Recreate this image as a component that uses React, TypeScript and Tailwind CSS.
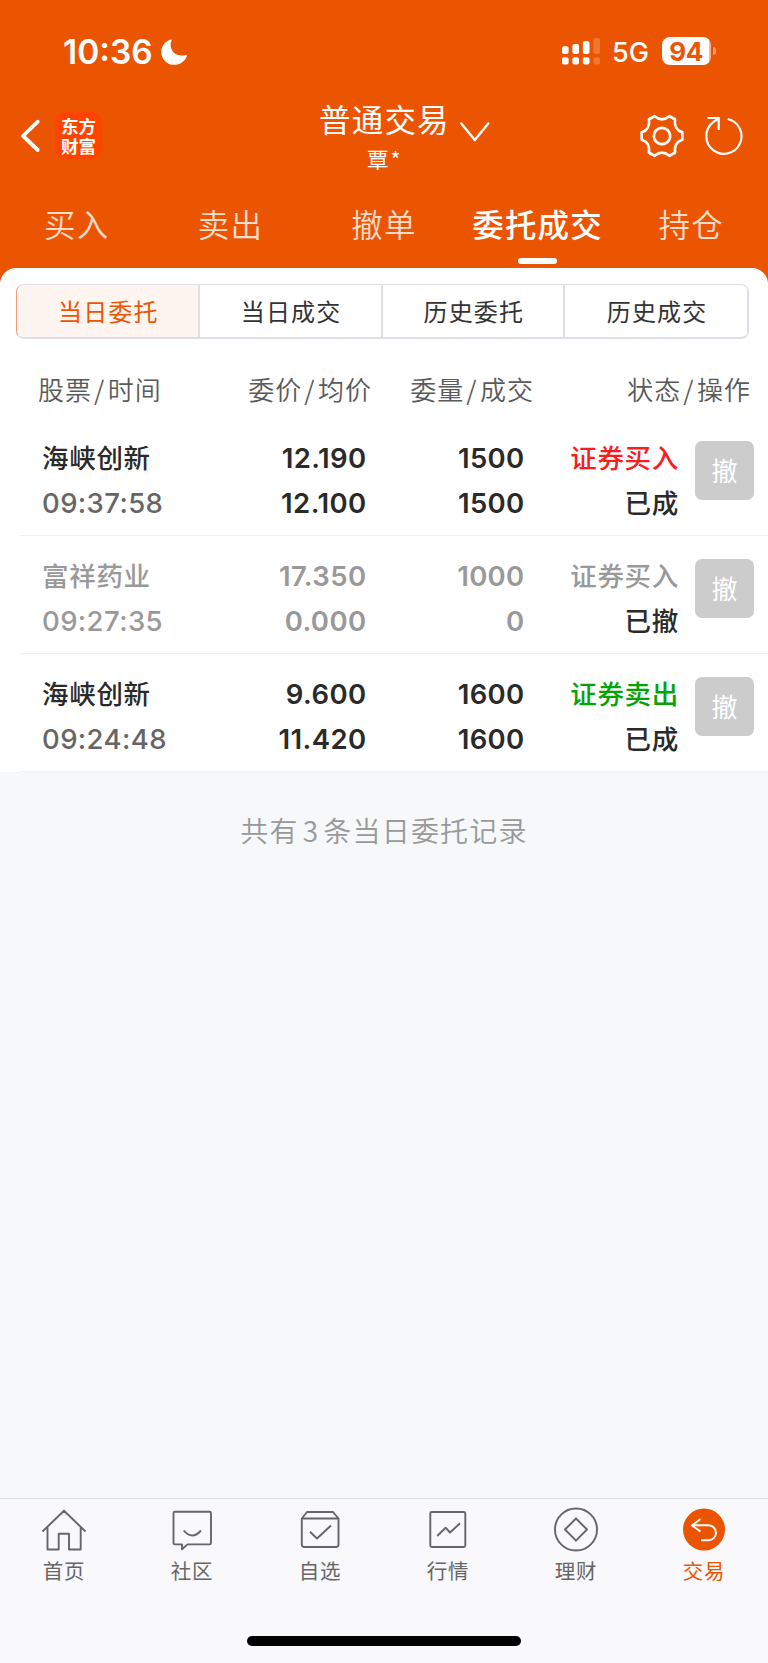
import React from "react";

const CJK = "font-['Noto_Sans_CJK_SC',sans-serif]";
const NUM = "font-['Inter','Noto_Sans_CJK_SC',sans-serif]";

type Order = {
  name: string;
  time: string;
  price: string;
  avg: string;
  amount: string;
  filled: string;
  side: string;
  sideColor: string;
  status: string;
  cancelled?: boolean;
};

const orders: Order[] = [
  { name: "海峡创新", time: "09:37:58", price: "12.190", avg: "12.100", amount: "1500", filled: "1500", side: "证券买入", sideColor: "text-[#fb1c1c]", status: "已成" },
  { name: "富祥药业", time: "09:27:35", price: "17.350", avg: "0.000", amount: "1000", filled: "0", side: "证券买入", sideColor: "text-[#999999]", status: "已撤", cancelled: true },
  { name: "海峡创新", time: "09:24:48", price: "9.600", avg: "11.420", amount: "1600", filled: "1600", side: "证券卖出", sideColor: "text-[#06a306]", status: "已成" },
];

function StatusBar() {
  return (
    <div className="flex h-[104px] items-start pt-[31px]">
      <span className={`${NUM} mt-px ml-[63px] w-[98px] text-[33.500px] leading-[40px] font-semibold`}>10:36</span>
      <svg className="mt-[8px] h-[27px] w-[27px]" viewBox="0 0 27 27" fill="#fff">
        <path d="M9.8 0.6C4.4 2.2 0.3 7 0.3 12.9 0.3 20 6 25.8 13.1 25.8c5.8 0 10.8-3.500 12.700-8.600.3-.9-.3-1.500-1.200-1.200-1.300.4-2.400.6-3.900.6-6.600 0-11.100-4.500-11.100-11 0-1.500.3-2.700.9-3.900.4-.8 0-1.300-.7-1.100z" />
      </svg>
      <svg className="mt-[6px] ml-[374px] h-[29px] w-[40px]" viewBox="0 0 40 29" fill="#fff">
        <rect x="0" y="9.300" width="6.600" height="7.700" rx="2" />
        <rect x="10.400" y="7" width="6.600" height="10" rx="2" />
        <rect x="20.900" y="4" width="6.600" height="13" rx="2" />
        <rect x="31.400" y="1" width="6.600" height="16" rx="2" opacity=".2" />
        <rect x="0" y="20.300" width="6.600" height="7.200" rx="2" />
        <rect x="10.400" y="20.300" width="6.600" height="7.200" rx="2" />
        <rect x="20.900" y="20.300" width="6.600" height="7.200" rx="2" />
        <rect x="31.400" y="20.300" width="6.600" height="7.200" rx="2" opacity=".2" />
      </svg>
      <span className={`${NUM} mt-[2px] ml-[10px] w-[50px] text-[27px] leading-[40px] font-medium`}>5G</span>
      <div className="mt-[6px] flex h-[28px] w-[49px] items-center rounded-[8px] bg-[linear-gradient(to_right,#fff_47px,#f7b48f_47px)]">
        <span className={`${NUM} mt-px w-[48px] text-center text-[26px] leading-[36px] font-bold tracking-[-0.5px] text-[#eb5502]`}>94</span>
      </div>
      <div className="mt-[16px] ml-[2px] h-[8px] w-[3px] rounded-r-full bg-[#f39a69]" />
    </div>
  );
}

function TitleBar() {
  return (
    <div className="flex h-[82px]">
      <svg className="mt-[13px] ml-[19px] h-[38px] w-[24px]" viewBox="0 0 24 38" fill="none" stroke="#fff" strokeWidth="3.800" strokeLinecap="round" strokeLinejoin="round">
        <path d="M18.800 4.700 4 19l14.800 14" />
      </svg>
      <div className={`${CJK} mt-[8px] ml-[12px] flex h-[47px] w-[47px] flex-col items-center rounded-[10px] bg-[#ff4400] pt-[4px] text-[17.500px] leading-[19.500px] font-bold`}>
        <span>东方</span>
        <span>财富</span>
      </div>
      <div className="ml-[217px] w-[133px]">
        <div className={`${CJK} mt-[-2px] text-[31.500px] leading-[32px] font-normal tracking-[1.200px] whitespace-nowrap`}>普通交易</div>
        <div className={`${CJK} mt-[11px] pl-[48px] text-[21.500px] leading-[28px] tracking-[2px]`}>覃*</div>
      </div>
      <svg className="mt-[16px] ml-[6px] h-[24px] w-[34px]" viewBox="0 0 34 24" fill="none" stroke="#fff" strokeWidth="2.400" strokeLinecap="round" strokeLinejoin="round">
        <path d="M3.300 3.500 16.800 20 30.300 3.500" />
      </svg>
      <svg className="mt-[8px] ml-[146px] h-[48px] w-[48px]" viewBox="0 0 48 48" fill="none" stroke="#fff" strokeWidth="2.700" strokeLinejoin="round">
        <circle cx="24" cy="24" r="8.200" />
        <path d="M16.700 4.200Q24 10.400 31.300 4.200L37 7.300C36.300 13.500 37.500 18 44.300 20.300V27.700C37.500 30 36.300 34.500 37 40.700L31.300 43.800Q24 37.600 16.700 43.800L11 40.700C11.700 34.500 10.500 30 3.700 27.700V20.300C10.500 18 11.700 13.500 11 7.300Z" />
      </svg>
      <svg className="mt-[8px] ml-[14px] h-[48px] w-[48px]" viewBox="0 0 48 48" fill="none" stroke="#fff" strokeWidth="2.200">
        <path d="M27.700 7A17.600 17.600 0 1 1 12.600 10.700L18.500 6.500" />
        <path d="M7.500 6H18.700V18" />
      </svg>
    </div>
  );
}

function Tabs() {
  const tabs = ["买入", "卖出", "撤单", "委托成交", "持仓"];
  return (
    <div className={`${CJK} grid h-[82px] grid-cols-5 text-[31.500px] leading-[40px] tracking-[1.200px]`}>
      {tabs.map((t) =>
        t === "委托成交" ? (
          <div key={t} className="flex flex-col items-center pt-[17px]">
            <span className="font-medium whitespace-nowrap">{t}</span>
            <span className="mt-[15px] h-[6px] w-[39px] rounded-full bg-white" />
          </div>
        ) : (
          <div key={t} className="pt-[17px] text-center font-[350] text-[#fcdccb]">{t}</div>
        )
      )}
    </div>
  );
}

function Segments() {
  const items = ["当日委托", "当日成交", "历史委托", "历史成交"];
  return (
    <div className={`${CJK} mr-[19px] ml-[16px] grid h-[55px] grid-cols-4 overflow-hidden rounded-[8px] border border-b-2 border-[#dcdfe6] border-l-[#ee9e78] text-[24px] leading-[51px] tracking-[1.200px] text-[#333333]`}>
      {items.map((t, i) => (
        <div
          key={t}
          className={`pl-[2px] text-center ${i === 0 ? "bg-[#fff5f0] text-[#eb5502]" : ""} ${i < 3 ? "border-r-2 border-[#dcdfe6]" : "border-r border-[#dcdfe6]"}`}
        >
          {t}
        </div>
      ))}
    </div>
  );
}

function HeadCell({ a, b, className }: { a: string; b: string; className: string }) {
  return (
    <div className={className}>
      {a}
      <span className="mr-[2.500px] ml-[2px]">/</span>
      {b}
    </div>
  );
}

function OrderRow({ o }: { o: Order }) {
  const dark = o.cancelled ? "text-[#999999]" : "text-[#2a2a2a]";
  return (
    <div className="ml-[20px] flex h-[118px] border-b border-[#f0f0f2] pt-[17px]">
      <div className="w-[165px] pl-[22px]">
        <div className={`${CJK} ${dark} -mt-[1px] h-[47px] text-[26.500px] leading-[45px] font-medium tracking-[0.700px]`}>{o.name}</div>
        <div className={`${NUM} ${o.cancelled ? "text-[#999999]" : "text-[#666666]"} h-[45px] text-[27.500px] leading-[45px] font-medium tracking-[0.400px]`}>{o.time}</div>
      </div>
      <div className={`${NUM} ${dark} mt-px w-[181.500px] text-right text-[27.500px] leading-[45px] font-semibold tracking-[0.400px]`}>
        <div>{o.price}</div>
        <div>{o.avg}</div>
      </div>
      <div className={`${NUM} ${dark} mt-px w-[158px] text-right text-[27.500px] leading-[45px] font-semibold tracking-[0.300px]`}>
        <div>{o.amount}</div>
        <div>{o.filled}</div>
      </div>
      <div className={`${CJK} -mt-[1px] w-[154.500px] text-right text-[26.500px] leading-[45px] font-medium tracking-[0.700px]`}>
        <div className={o.sideColor}>{o.side}</div>
        <div className="text-[#2a2a2a]">{o.status}</div>
      </div>
      <button className={`${CJK} mt-[6px] ml-[16px] h-[59px] w-[59px] rounded-[7px] bg-[#cccccc] text-center text-[26px] leading-[55px] text-white`}>
        <span className="-mt-[2px] block">撤</span>
      </button>
    </div>
  );
}

const navIcons: Record<string, React.ReactNode> = {
  首页: (
    <path d="M2.500 25.500 24 4.800 45.500 25.500M7.500 21.500V43.500H18.700V27.800H29V43.500H40.700V21.500" />
  ),
  社区: (
    <>
      <path d="M7 5.700H41.500Q43 5.700 43 7.200V37Q43 38.400 41.500 38.400H19.500L14 43.300V38.400H7Q5.500 38.400 5.500 37V7.200Q5.500 5.700 7 5.700Z" />
      <path d="M15.700 24.500Q24.200 34.500 33 24.500" />
    </>
  ),
  自选: (
    <>
      <path d="M5.800 12.500 11 6H37L42.500 12.500V38.500Q42.500 41 40 41H8.300Q5.800 41 5.800 38.500ZM5.800 12.500H42.500" />
      <path d="M14 25.700 21 32.500 35 19.500" />
    </>
  ),
  行情: (
    <>
      <rect x="6.300" y="6" width="35" height="35" rx="1.500" />
      <path d="M13.200 30 21.600 21.700 26 26.500 36 17.300" />
    </>
  ),
  理财: (
    <>
      <circle cx="24" cy="23.500" r="21" />
      <path d="M24 12.500 35 23.500 24 34.700 13 23.500Z" />
    </>
  ),
  交易: (
    <>
      <circle cx="24" cy="23.500" r="21" fill="#eb5502" stroke="none" />
      <path d="M20.500 13 12 19.500 20.500 25.500M12 19.300H28.500A7.500 7.500 0 0 1 28.500 34.300H21" stroke="#fff" />
    </>
  ),
};

function BottomNav() {
  return (
    <nav className="mt-auto flex h-[165px] flex-col border-t border-[#dedfe2] bg-[#f9f9fb]">
      <div className={`${CJK} grid grid-cols-6 text-[20.500px] leading-[28px] text-[#666666]`}>
        {Object.keys(navIcons).map((k) => (
          <div key={k} className={`flex flex-col items-center pt-[7px] ${k === "交易" ? "text-[#eb5502]" : ""}`}>
            <svg className="h-[48px] w-[48px]" viewBox="0 0 48 48" fill="none" stroke="#666666" strokeWidth="1.900" strokeLinejoin="round">
              {navIcons[k]}
            </svg>
            <span className="mt-[2px] tracking-[0.800px]">{k}</span>
          </div>
        ))}
      </div>
      <div className="mx-auto mt-auto mb-[17px] h-[10px] w-[274px] rounded-full bg-black" />
    </nav>
  );
}

export default function App() {
  return (
    <div className="flex h-[1663px] w-[768px] flex-col overflow-hidden bg-[#f6f8fa]">
      <header className="h-[288px] shrink-0 bg-[#eb5502] text-white">
        <StatusBar />
        <TitleBar />
        <Tabs />
      </header>
      <main className="-mt-[20px] rounded-t-[16px] bg-white pt-[16px]">
        <Segments />
        <div className={`${CJK} flex h-[79px] pt-[30px] text-[26px] leading-[40px] font-[350] tracking-[1px] whitespace-nowrap text-[#5a5a5a]`}>
          <HeadCell className="w-[192px] pl-[38px]" a="股票" b="时间" />
          <HeadCell className="w-[180px] text-right" a="委价" b="均价" />
          <HeadCell className="w-[162px] text-right" a="委量" b="成交" />
          <HeadCell className="w-[217px] text-right" a="状态" b="操作" />
        </div>
        {orders.map((o) => (
          <OrderRow key={o.time} o={o} />
        ))}
      </main>
      <p className={`${CJK} mt-[38px] text-center text-[28px] leading-[40px] font-[350] tracking-[1.200px] text-[#999999]`}>
        共有<span className="mx-[4px]">3</span>条当日委托记录
      </p>
      <BottomNav />
    </div>
  );
}
